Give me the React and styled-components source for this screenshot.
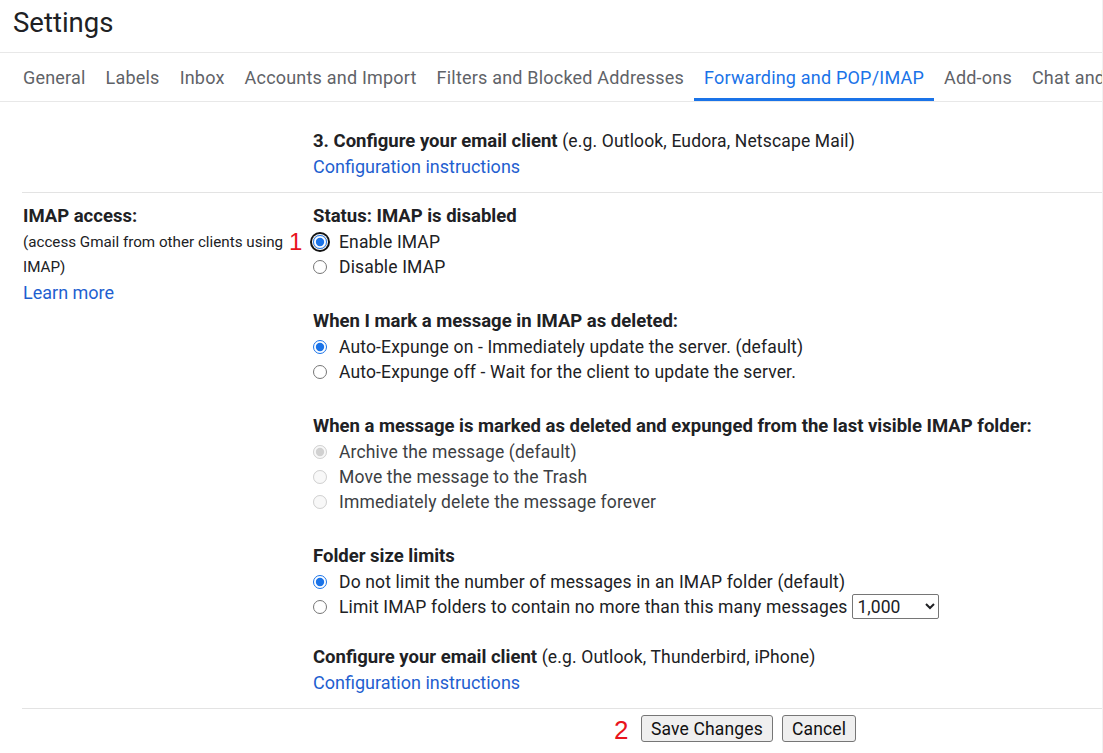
import React from 'react'
import styled, { createGlobalStyle } from 'styled-components'

const GlobalStyle = createGlobalStyle`
  html, body {
    margin: 0;
    padding: 0;
    background: #fff;
    overflow: hidden;
  }
  body {
    font-family: Roboto, "Liberation Sans", Arial, sans-serif;
    color: #202124;
  }
`

const Page = styled.div`
  width: 1103px;
  height: 753px;
  overflow: hidden;
  border-right: 1px solid #f1f1f1;
  box-sizing: border-box;
`

const Header = styled.div`
  height: 53px;
  padding: 6px 0 0 13px;
  box-sizing: border-box;
  border-bottom: 1px solid #e8e8e8;
`

const Title = styled.h1`
  margin: 0;
  font-size: 27.5px;
  font-weight: 400;
  line-height: 34px;
  color: #202124;
`

const TabBar = styled.div`
  position: relative;
  display: flex;
  height: 48px;
  padding-left: 13px;
  white-space: nowrap;
  overflow: hidden;
  border-bottom: 1px solid #e8e8e8;

  &::after {
    content: "";
    position: absolute;
    left: 675px;
    width: 330px;
    bottom: -3px;
    height: 1px;
    background: #f0f0f0;
  }
`

const Tab = styled.div`
  display: flex;
  align-items: center;
  padding: 3px 10px 0;
  font-size: 18px;
  letter-spacing: 0.2px;
  color: ${({ $active }) => ($active ? '#1a73e8' : '#5f6368')};
  border-bottom: 3px solid ${({ $active }) => ($active ? '#1a73e8' : 'transparent')};
`

const Content = styled.div`
  padding: 27px 0 0 22px;
`

const Section = styled.div`
  display: grid;
  grid-template-columns: 291px 1fr;
  padding: ${({ $top }) => $top || '11px'} 0 13px;
  border-bottom: 1px solid #e3e3e3;
`

const Aside = styled.div`
  padding-left: 1px;
`

const Main = styled.div``

const Group = styled.div`
  margin-bottom: ${({ $gap }) => $gap || '30px'};
  &:last-child {
    margin-bottom: 0;
  }
`

const Heading = styled.div`
  font-size: 18.5px;
  font-weight: 700;
  line-height: 25px;
  white-space: nowrap;
`

const Note = styled.span`
  font-weight: 400;
  font-size: 17.5px;
  letter-spacing: 0.15px;
`

const Desc = styled.div`
  font-size: 15.2px;
  line-height: 25px;
  color: #202124;
  margin-top: 1px;
`

const Link = styled.a`
  display: block;
  font-size: 18px;
  line-height: 25px;
  color: #1f5fd0;
  text-decoration: none;
  cursor: pointer;
`

const Option = styled.label`
  position: relative;
  display: flex;
  align-items: center;
  gap: 12px;
  min-height: 25px;
  font-size: 17.5px;
  letter-spacing: 0.15px;
  white-space: nowrap;
  color: ${({ $disabled }) => ($disabled ? '#3c4043' : '#202124')};
`

const Ring = styled.span`
  display: inline-flex;
  flex: none;
  border-radius: 50%;
  box-shadow: ${({ $on }) => ($on ? '0 0 0 1px #fff, 0 0 0 3px #111' : 'none')};
`

const Radio = styled.input.attrs({ type: 'radio' })`
  width: 14px;
  height: 14px;
  margin: 0;
  accent-color: #1a73e8;
  outline: none;
`

const Marker = styled.span`
  position: absolute;
  color: #e8141c;
  font-family: "Liberation Sans", Arial, sans-serif;
  font-size: ${({ $size }) => $size || '24px'};
  letter-spacing: 0;
  line-height: 1;
  left: ${({ $left }) => $left};
  top: ${({ $top }) => $top};
`

const Select = styled.select`
  margin-left: -8px;
  width: 87px;
  height: 25px;
  font-family: Roboto, "Liberation Sans", Arial, sans-serif;
  font-size: 17.5px;
  color: #202124;
  border: 1px solid #767676;
  border-radius: 2px;
  background: #fff;
  padding: 0 0 0 1px;
`

const Footer = styled.div`
  position: relative;
  display: flex;
  gap: 9px;
  padding: 6px 0 0 619px;
`

const Button = styled.button`
  height: 27px;
  padding: 0 9px;
  font-family: Roboto, "Liberation Sans", Arial, sans-serif;
  font-size: 17.5px;
  letter-spacing: 0.15px;
  color: #111;
  background: #efefef;
  border: 1px solid #767676;
  border-radius: 3px;
  cursor: pointer;
`

const Choice = ({ name, checked, disabled, focused, marker, children }) => (
  <Option $disabled={disabled}>
    {marker && <Marker $left="-24px" $top="1px">{marker}</Marker>}
    <Ring $on={focused}>
      <Radio name={name} defaultChecked={checked} disabled={disabled} />
    </Ring>
    {children}
  </Option>
)

const tabs = [
  'General',
  'Labels',
  'Inbox',
  'Accounts and Import',
  'Filters and Blocked Addresses',
  'Forwarding and POP/IMAP',
  'Add-ons',
  'Chat and Meet',
]

const App = () => {
  return (
    <Page>
      <GlobalStyle />
      <Header>
        <Title>Settings</Title>
      </Header>
      <TabBar>
        {tabs.map((t) => (
          <Tab key={t} $active={t === 'Forwarding and POP/IMAP'}>{t}</Tab>
        ))}
      </TabBar>

      <Content>
        <Section $top="0px">
          <Aside />
          <Main>
            <Heading>
              3. Configure your email client <Note>(e.g. Outlook, Eudora, Netscape Mail)</Note>
            </Heading>
            <Link>Configuration instructions</Link>
          </Main>
        </Section>

        <Section>
          <Aside>
            <Heading>IMAP access:</Heading>
            <Desc>
              (access Gmail from other clients using
              <br />
              IMAP)
            </Desc>
            <Link>Learn more</Link>
          </Aside>
          <Main>
            <Group>
              <Heading>Status: IMAP is disabled</Heading>
              <Choice name="imap" checked focused marker="1">Enable IMAP</Choice>
              <Choice name="imap">Disable IMAP</Choice>
            </Group>

            <Group>
              <Heading>When I mark a message in IMAP as deleted:</Heading>
              <Choice name="expunge" checked>Auto-Expunge on - Immediately update the server. (default)</Choice>
              <Choice name="expunge">Auto-Expunge off - Wait for the client to update the server.</Choice>
            </Group>

            <Group>
              <Heading>When a message is marked as deleted and expunged from the last visible IMAP folder:</Heading>
              <Choice name="deleted" checked disabled>Archive the message (default)</Choice>
              <Choice name="deleted" disabled>Move the message to the Trash</Choice>
              <Choice name="deleted" disabled>Immediately delete the message forever</Choice>
            </Group>

            <Group $gap="26px">
              <Heading>Folder size limits</Heading>
              <Choice name="limit" checked>Do not limit the number of messages in an IMAP folder (default)</Choice>
              <Choice name="limit">
                Limit IMAP folders to contain no more than this many messages
                <Select defaultValue="1000">
                  <option value="1000">1,000</option>
                  <option value="2000">2,000</option>
                  <option value="5000">5,000</option>
                  <option value="10000">10,000</option>
                </Select>
              </Choice>
            </Group>

            <Group>
              <Heading>
                Configure your email client <Note>(e.g. Outlook, Thunderbird, iPhone)</Note>
              </Heading>
              <Link>Configuration instructions</Link>
            </Group>
          </Main>
        </Section>

        <Footer>
          <Marker $size="26px" $left="592px" $top="8px">2</Marker>
          <Button>Save Changes</Button>
          <Button>Cancel</Button>
        </Footer>
      </Content>
    </Page>
  )
}

export default App
